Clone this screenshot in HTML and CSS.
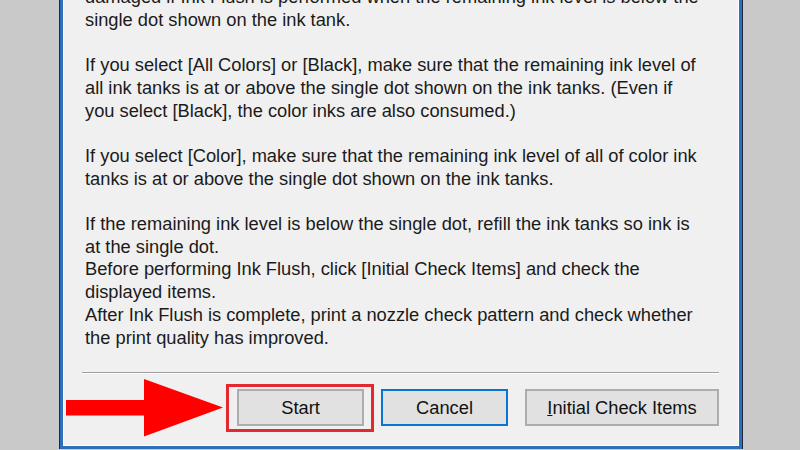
FILE: index.html
```html
<!DOCTYPE html>
<html lang="en">
<head>
<meta charset="utf-8">
<title>Ink Flush</title>
<link rel="stylesheet" href="styles.css">
</head>
<body>
<div class="screen">
  <div class="dialog">
    <div class="message">
      <p>damaged if Ink Flush is performed when the remaining ink level is below the<br>single dot shown on the ink tank.</p>
      <p>If you select [All Colors] or [Black], make sure that the remaining ink level of<br>all ink tanks is at or above the single dot shown on the ink tanks. (Even if<br>you select [Black], the color inks are also consumed.)</p>
      <p>If you select [Color], make sure that the remaining ink level of all of color ink<br>tanks is at or above the single dot shown on the ink tanks.</p>
      <p class="tight">If the remaining ink level is below the single dot, refill the ink tanks so ink is<br>at the single dot.<br>Before performing Ink Flush, click [Initial Check Items] and check the<br>displayed items.<br>After Ink Flush is complete, print a nozzle check pattern and check whether<br>the print quality has improved.</p>
    </div>
    <div class="separator"></div>
    <div class="buttons">
      <div class="highlight-wrap">
        <button class="btn btn-start">Start</button>
        <span class="highlight"></span>
      </div>
      <button class="btn btn-cancel">Cancel</button>
      <button class="btn btn-initial"><u>I</u>nitial Check Items</button>
    </div>
  </div>
  <svg class="arrow" width="800" height="450" viewBox="0 0 800 450" aria-hidden="true">
    <rect x="66" y="400" width="80" height="15.5" fill="#ff0000"/>
    <polygon points="144,379 223,407.5 144,436.5" fill="#ff0000"/>
  </svg>
</div>
</body>
</html>
```

FILE: styles.css
```css
html, body {
  margin: 0;
  padding: 0;
}

body {
  width: 800px;
  height: 450px;
  overflow: hidden;
  background: #c9c9c9;
  font-family: "Liberation Sans", Arial, sans-serif;
  color: #1b1b1b;
}

.screen {
  position: relative;
  width: 800px;
  height: 450px;
  overflow: hidden;
  padding-left: 60px;
  box-sizing: border-box;
}

.dialog {
  width: 682px;
  box-sizing: border-box;
  margin-top: -14px;
  background: #f0f0f0;
  border-left: 3px solid #2e6fba;
  border-right: 3px solid #2e6fba;
  border-bottom: 3px solid #2e6fba;
  box-shadow: inset 1px 0 0 #ffffff, inset -1px 0 0 #ffffff, inset 0 -1px 0 #ffffff, -1px 0 0 #1c2a3d, 1px 0 0 #1c2a3d;
  padding: 0 20px 20px 19px;
}

.message {
  padding-left: 3px;
  font-size: 18.3px;
  line-height: 22.7px;
}

.message p {
  margin: 0 0 22.7px 0;
  white-space: nowrap;
}

.message p.tight {
  margin-bottom: 0;
}

.separator {
  margin-top: 23px;
  height: 1px;
  background: #a0a0a0;
  border-bottom: 1px solid #ffffff;
}

.buttons {
  margin-top: 15px;
  display: flex;
  justify-content: flex-end;
  gap: 17px;
}

.btn {
  height: 37px;
  box-sizing: border-box;
  background: #e1e1e1;
  border: 2px solid #adadad;
  font-family: "Liberation Sans", Arial, sans-serif;
  font-size: 18.3px;
  color: #111111;
  padding: 0;
  margin: 0;
}

.btn-start,
.btn-cancel {
  width: 127px;
}

.btn-cancel {
  border-color: #0a74d2;
}

.btn-initial {
  width: 194px;
}

.highlight-wrap {
  position: relative;
  display: flex;
}

.highlight {
  position: absolute;
  left: -11px;
  right: -10px;
  top: -5px;
  bottom: -6px;
  border: 3px solid #e3282e;
}

.arrow {
  position: absolute;
  left: 0;
  top: 0;
  pointer-events: none;
}
```
